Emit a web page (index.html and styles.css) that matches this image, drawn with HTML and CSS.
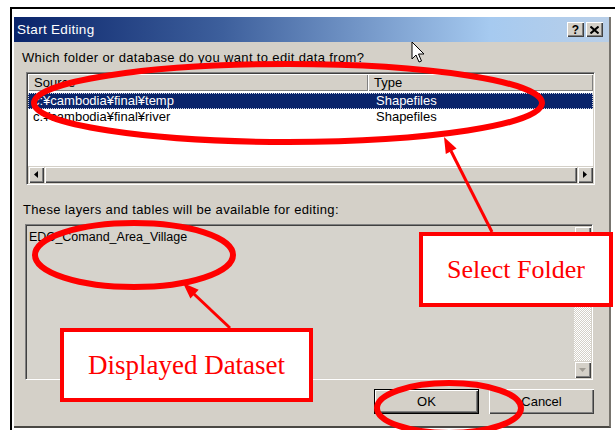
FILE: index.html
```html
<!DOCTYPE html>
<html>
<head>
<meta charset="utf-8">
<title>Start Editing</title>
<link rel="stylesheet" href="styles.css">
</head>
<body>
<div class="page">
  <div class="frame">
    <div class="window">
      <div class="titlebar">
        <span class="title">Start Editing</span>
        <div class="caption-buttons">
          <span class="cap-btn">?</span>
          <span class="cap-btn">
            <svg width="9" height="8" viewBox="0 0 9 8"><path d="M0.5 0.5 L8.5 7.5 M8.5 0.5 L0.5 7.5" stroke="#000" stroke-width="2"/></svg>
          </span>
        </div>
      </div>
      <div class="client">
        <div class="label">Which folder or database do you want to edit data from?</div>
        <div class="listview sunken">
          <div class="lv-header">
            <div class="col col-source">Source</div>
            <div class="col col-type">Type</div>
          </div>
          <div class="lv-rows">
            <div class="row selected"><span class="cell c-source">c:¥cambodia¥final¥temp</span><span class="cell c-type">Shapefiles</span></div>
            <div class="row"><span class="cell c-source">c:¥cambodia¥final¥river</span><span class="cell c-type">Shapefiles</span></div>
          </div>
          <div class="hscroll">
            <div class="sb-btn"><svg width="4" height="7" viewBox="0 0 4 7"><path d="M4 0 L0 3.5 L4 7 Z" fill="#000"/></svg></div>
            <div class="sb-thumb"></div>
            <div class="sb-btn"><svg width="4" height="7" viewBox="0 0 4 7"><path d="M0 0 L4 3.5 L0 7 Z" fill="#000"/></svg></div>
          </div>
        </div>
        <div class="label label-layers">These layers and tables will be available for editing:</div>
        <div class="layerbox sunken">
          <div class="layer-list">
            <div class="layer-item">EDC_Comand_Area_Village</div>
          </div>
          <div class="vscroll">
            <div class="sb-btn vbtn"><svg width="7" height="4" viewBox="0 0 7 4"><path d="M0 4 L3.5 0 L7 4 Z" fill="#a09c94"/></svg></div>
            <div class="sb-track"></div>
            <div class="sb-btn vbtn"><svg width="7" height="4" viewBox="0 0 7 4"><path d="M0 0 L3.5 4 L7 0 Z" fill="#a09c94"/></svg></div>
          </div>
        </div>
        <div class="buttons">
          <button class="btn btn-default">OK</button>
          <button class="btn">Cancel</button>
        </div>
      </div>
    </div>
  </div>

  <!-- red markup drawn over the dialog -->
  <svg class="marks" width="615" height="430" viewBox="0 0 615 430">
    <g fill="none" stroke="#ff0000" stroke-width="6">
      <ellipse cx="288" cy="103" rx="254" ry="39"/>
      <ellipse cx="134" cy="255" rx="99" ry="32"/>
      <ellipse cx="449" cy="408" rx="72" ry="25"/>
    </g>
    <g stroke="#ff0000" stroke-width="3">
      <line x1="492" y1="232" x2="451" y2="151"/>
      <line x1="230" y1="328" x2="194" y2="294"/>
    </g>
    <g fill="#ff0000">
      <polygon points="444,137 456.6,148.6 445.8,154"/>
      <polygon points="183,283 198.7,289.8 190.4,298.4"/>
    </g>
  </svg>
  <div class="callout callout-folder">Select Folder</div>
  <div class="callout callout-dataset">Displayed Dataset</div>

  <svg class="cursor" width="14" height="23" viewBox="0 0 14 23">
    <path d="M1 1 L1 18 L5 14 L8 21 L10.5 20 L7.5 13 L13 13 Z" fill="#fff" stroke="#000" stroke-width="1" stroke-linejoin="miter"/>
  </svg>
</div>
</body>
</html>
```

FILE: styles.css
```css
* {
  box-sizing: border-box;
}

html,
body {
  margin: 0;
  padding: 0;
}

body {
  width: 615px;
  height: 430px;
  overflow: hidden;
  background: #fff;
  font-family: "Liberation Sans", Arial, sans-serif;
  font-size: 12px;
  color: #000;
}

.page {
  position: relative;
  width: 615px;
  height: 430px;
  padding: 7px 0 0 10px;
}

.frame {
  height: 100%;
  border-top: 2px solid #000;
  border-left: 2px solid #000;
  padding: 8px 0 0 2px;
}

/* dialog window */
.window {
  width: 597px;
  height: 411px;
  background: #d4d0c8;
  border-right: 2px solid #77746e;
  border-bottom: 2px solid #4a4844;
  display: flex;
  flex-direction: column;
}

.titlebar {
  height: 25px;
  flex: none;
  display: flex;
  align-items: center;
  justify-content: space-between;
  padding: 0 6px 0 3px;
  background: linear-gradient(90deg, #0a246a 0%, #3d5f9c 35%, #a6caf0 80%, #b9cfe8 100%);
}

.title {
  color: #fff;
  font-size: 13.5px;
  letter-spacing: 0.3px;
}

.caption-buttons {
  display: flex;
  gap: 2px;
}

.cap-btn {
  width: 17px;
  height: 15px;
  display: flex;
  align-items: center;
  justify-content: center;
  background: #d4d0c8;
  font-weight: bold;
  font-size: 12px;
  line-height: 1;
  box-shadow: inset 1px 1px #fff, inset -1px -1px #404040, inset -2px -2px #808080;
}

.client {
  flex: 1;
  display: flex;
  flex-direction: column;
  padding: 8px 15px 0 8px;
}

.label {
  height: 16px;
  line-height: 16px;
  font-size: 13px;
  letter-spacing: 0.35px;
  white-space: nowrap;
}

/* sunken 3d border */
.sunken {
  border: 1px solid;
  border-color: #808080 #fff #fff #808080;
  box-shadow: inset 1px 1px #404040, inset -1px -1px #d4d0c8;
  padding: 1px;
}

.listview {
  margin: 6px 0 0 4px;
  width: 569px;
  height: 113px;
  background: #fff;
  display: flex;
  flex-direction: column;
}

.lv-header {
  display: flex;
  height: 17px;
  flex: none;
}

.col {
  background: #d4d0c8;
  height: 17px;
  line-height: 17px;
  padding-left: 6px;
  font-size: 13px;
  box-shadow: inset 1px 1px #fff, inset -1px -1px #808080;
}

.col-source {
  width: 340px;
}

.col-type {
  flex: 1;
}

.lv-rows {
  flex: 1;
  padding-top: 2px;
}

.row {
  display: flex;
  height: 16px;
  line-height: 16px;
  font-size: 13px;
  white-space: nowrap;
}

.row.selected {
  background: #0a246a;
  color: #fff;
  outline: 1px dotted #d0d4e0;
  outline-offset: -1px;
}

.c-source {
  width: 340px;
  padding-left: 5px;
}

.c-type {
  padding-left: 8px;
}

.hscroll {
  height: 17px;
  flex: none;
  display: flex;
}

.sb-btn {
  width: 16px;
  height: 17px;
  flex: none;
  display: flex;
  align-items: center;
  justify-content: center;
  background: #d4d0c8;
  box-shadow: inset 1px 1px #d4d0c8, inset 2px 2px #fff, inset -1px -1px #404040, inset -2px -2px #808080;
}

.sb-thumb {
  flex: 1;
  background: #d4d0c8;
  box-shadow: inset 1px 1px #d4d0c8, inset 2px 2px #fff, inset -1px -1px #404040, inset -2px -2px #808080;
}

.label-layers {
  margin-top: 17px;
  margin-left: 1px;
}

.layerbox {
  margin: 6px 0 0 3px;
  width: 568px;
  height: 156px;
  background: #d6d3cc;
  display: flex;
}

.layer-list {
  flex: 1;
  padding: 3px 0 0 2px;
}

.layer-item {
  font-size: 12.5px;
  line-height: 16px;
}

.vscroll {
  width: 17px;
  display: flex;
  flex-direction: column;
}

.vbtn {
  width: 17px;
  height: 17px;
}

.sb-track {
  flex: 1;
  background: repeating-conic-gradient(#fff 0 25%, #d4d0c8 0 50%) 0 0 / 2px 2px;
}

.buttons {
  display: flex;
  justify-content: flex-end;
  gap: 10px;
  margin-top: 9px;
}

.btn {
  width: 105px;
  height: 25px;
  margin: 0;
  padding: 0;
  border: 0;
  background: #d4d0c8;
  font-family: "Liberation Sans", Arial, sans-serif;
  font-size: 13px;
  color: #000;
  box-shadow: inset 1px 1px #fff, inset -1px -1px #404040, inset -2px -2px #808080;
}

.btn-default {
  box-shadow: inset 0 0 0 1px #000, inset 2px 2px #fff, inset -2px -2px #404040, inset -3px -3px #808080;
}

/* annotations */
.marks {
  position: absolute;
  left: 0;
  top: 0;
  pointer-events: none;
}

.callout {
  position: absolute;
  display: flex;
  align-items: center;
  justify-content: center;
  background: #fff;
  border: 4px solid #ff0000;
  color: #ff0000;
  font-family: "Liberation Serif", "Times New Roman", serif;
  white-space: nowrap;
}

.callout-folder {
  left: 419px;
  top: 232px;
  width: 194px;
  height: 75px;
  font-size: 26px;
}

.callout-dataset {
  left: 60px;
  top: 328px;
  width: 253px;
  height: 74px;
  font-size: 27px;
}

.cursor {
  position: absolute;
  left: 411px;
  top: 41px;
}
```
